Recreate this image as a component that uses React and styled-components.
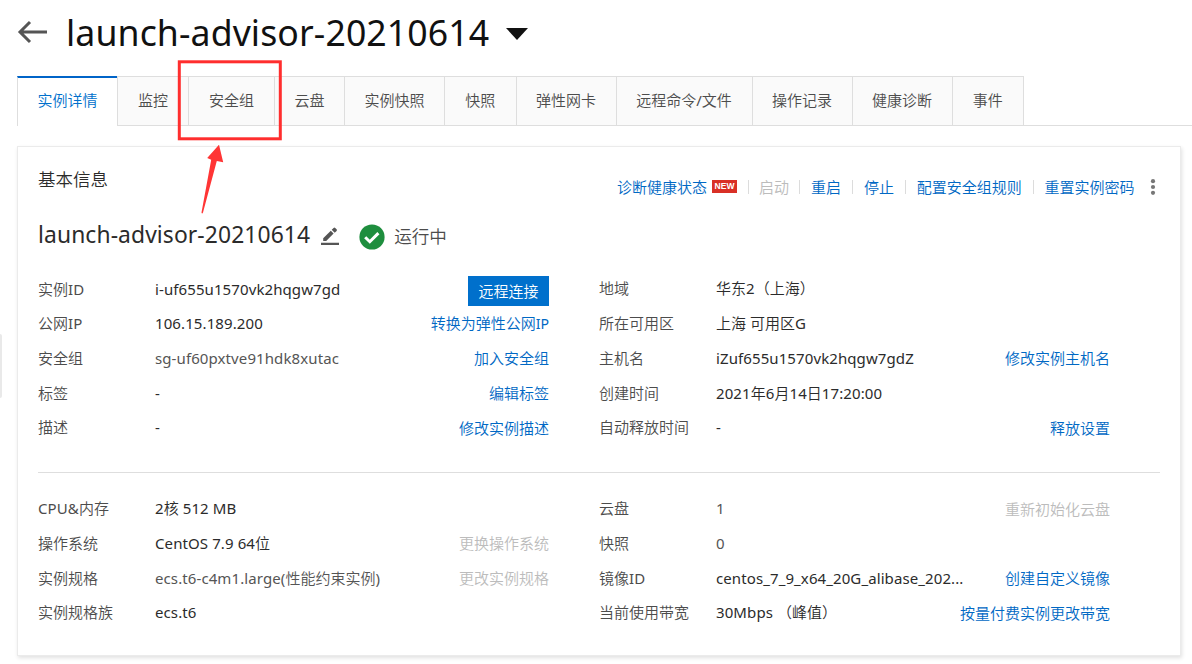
import React from "react";
import styled, { createGlobalStyle } from "styled-components";

const GlobalStyle = createGlobalStyle`
  * { box-sizing: border-box; }
  body {
    margin: 0;
    background: #fff;
    color: #2b2b2b;
    font-family: "Noto Sans CJK SC", sans-serif;
    font-size: 15px;
    font-weight: 350;
    overflow: hidden;
  }
`;

const Page = styled.div`
  position: relative;
  height: 664px;
  padding: 0 0 0 17px;
  overflow: hidden;
  background: #fff;
`;

const LatinRun = styled.span`
  font-family: "Noto Sans", sans-serif;
  font-size: 1em;
  font-weight: 400;
  letter-spacing: 0.1px;
  white-space: pre;
`;

const Text = ({ children }) =>
  children
    .split(/([\x20-\x7e]+)/)
    .filter(Boolean)
    .map((run, i) =>
      /^[\x20-\x7e]/.test(run) ? <LatinRun key={i}>{run}</LatinRun> : run
    );

const Header = styled.header`
  display: flex;
  align-items: center;
  height: 76px;
  padding-bottom: 11px;
`;

const BackIcon = styled.svg`
  width: 31px;
  height: 24px;
  margin: 0 18px 2px 0;
`;

const Title = styled.h1`
  margin: 0 0 3px;
  font-size: 35.65px;
  line-height: 50px;
  font-weight: 400;
  color: #111;
`;

const Caret = styled.svg`
  width: 22px;
  height: 12px;
  margin: 2px 0 0 17px;
`;

const Tabs = styled.nav`
  display: flex;
  height: 50px;
  border-bottom: 1px solid #dedede;
`;

const Tab = styled.a`
  width: ${(p) => p.$w}px;
  height: ${(p) => (p.$active ? 50 : 49)}px;
  flex: none;
  text-align: center;
  line-height: 46px;
  color: ${(p) => (p.$active ? "#0070cc" : "#4c4c4c")};
  background: ${(p) => (p.$active ? "#fff" : "#fafafa")};
  border-left: 1px solid #dedede;
  border-top: ${(p) => (p.$active ? "2px solid #0064c8" : "1px solid #dedede")};
  ${(p) => p.$active && "line-height: 44px;"}
  &:last-child { border-right: 1px solid #dedede; }
`;

const Card = styled.section`
  width: 1164px;
  height: 510px;
  margin-top: 20px;
  padding: 19px 20px 0;
  border: 1px solid #ebebeb;
  box-shadow: 1px 2px 4px rgba(0, 0, 0, 0.12);
`;

const CardHead = styled.div`
  display: flex;
  justify-content: space-between;
  height: 43px;
`;

const CardTitle = styled.h2`
  margin: 0;
  font-size: 17.5px;
  line-height: 26px;
  font-weight: inherit;
`;

const Actions = styled.div`
  display: flex;
  align-items: center;
  height: 41px;
`;

const Action = styled.a`
  margin: 0 ${(p) => (p.$disabled ? "-0.75px" : "0")};
  color: ${(p) => (p.$disabled ? "#bcbcbc" : "#0068c4")};
  white-space: nowrap;
`;

const Separator = styled.i`
  width: 1px;
  height: 14px;
  margin: 0 10.9px;
  background: #dcdcdc;
`;

const NewBadge = styled.span`
  width: 25px;
  height: 13px;
  margin-left: 5px;
  background: #d93026;
  color: #fff;
  font: bold 8.5px/13px "Liberation Sans", sans-serif;
  text-align: center;
`;

const MoreIcon = styled.svg`
  width: 6px;
  height: 16px;
  margin: 0 4px 0 15.5px;
`;

const NameRow = styled.div`
  display: flex;
  align-items: center;
  height: 53px;
`;

const Name = styled.span`
  margin-bottom: 4px;
  font-size: 22.85px;
  line-height: 32px;
`;

const EditIcon = styled.svg`
  width: 18px;
  height: 18px;
  margin: 1px 0 0 11px;
`;

const StatusIcon = styled.svg`
  width: 26px;
  height: 26px;
  margin: 2px 9px 0 20px;
`;

const Status = styled.span`
  margin-bottom: 1px;
  font-size: 17.6px;
  color: #4c4c4c;
`;

const Details = styled.div`
  display: grid;
  grid-template-columns: 1fr 1fr;
  padding-top: ${(p) => p.$top}px;
`;

const Row = styled.div`
  display: grid;
  grid-template-columns: 117px 1fr auto;
  align-items: center;
  height: 34.75px;
  padding-right: 50px;
  line-height: 24px;
  white-space: nowrap;
`;

const Label = styled.span`
  color: #4c4c4c;
`;

const Value = styled.span`
  color: ${(p) => (p.$muted ? "#555" : "#2b2b2b")};
`;

const RowAction = styled.a`
  padding-top: 1px;
  color: ${(p) => (p.$disabled ? "#bcbcbc" : "#0068c4")};
  ${LatinRun} { font-size: 0.94em; letter-spacing: 0; }
`;

const ConnectButton = styled.button`
  width: 81px;
  height: 30px;
  margin-top: 5px;
  padding: 0;
  border: 0;
  background: #0070cc;
  color: #fff;
  font: inherit;
  line-height: 30px;
`;

const Divider = styled.hr`
  height: 1px;
  margin: 27px 0 0;
  border: 0;
  background: #dedede;
`;

const SideHandle = styled.div`
  position: absolute;
  left: 0;
  top: 334px;
  width: 2px;
  height: 64px;
  background: #e9e9e9;
  border-radius: 0 2px 2px 0;
`;

const Annotation = styled.svg`
  position: absolute;
  left: 176px;
  top: 58px;
  width: 108px;
  height: 160px;
`;

const tabs = [
  ["实例详情", 100],
  ["监控", 71],
  ["安全组", 86],
  ["云盘", 70],
  ["实例快照", 100],
  ["快照", 71.5],
  ["弹性网卡", 100],
  ["远程命令/文件", 136],
  ["操作记录", 100],
  ["健康诊断", 100],
  ["事件", 72.5],
];

const basics = [
  { label: "实例ID", value: "i-uf655u1570vk2hqgw7gd", button: "远程连接" },
  { label: "地域", value: "华东2（上海）" },
  { label: "公网IP", value: "106.15.189.200", action: "转换为弹性公网IP" },
  { label: "所在可用区", value: "上海 可用区G" },
  { label: "安全组", value: "sg-uf60pxtve91hdk8xutac", muted: true, action: "加入安全组" },
  { label: "主机名", value: "iZuf655u1570vk2hqgw7gdZ", action: "修改实例主机名" },
  { label: "标签", value: "-", action: "编辑标签" },
  { label: "创建时间", value: "2021年6月14日17:20:00" },
  { label: "描述", value: "-", action: "修改实例描述" },
  { label: "自动释放时间", value: "-", action: "释放设置" },
];

const config = [
  { label: "CPU&内存", value: "2核 512 MB" },
  { label: "云盘", value: "1", muted: true, action: "重新初始化云盘", disabled: true },
  { label: "操作系统", value: "CentOS 7.9 64位", action: "更换操作系统", disabled: true },
  { label: "快照", value: "0", muted: true },
  { label: "实例规格", value: "ecs.t6-c4m1.large(性能约束实例)", muted: true, action: "更改实例规格", disabled: true },
  { label: "镜像ID", value: "centos_7_9_x64_20G_alibase_202...", action: "创建自定义镜像" },
  { label: "实例规格族", value: "ecs.t6" },
  { label: "当前使用带宽", value: "30Mbps （峰值）", action: "按量付费实例更改带宽" },
];

const DetailRow = ({ item }) => (
  <Row>
    <Label><Text>{item.label}</Text></Label>
    <Value $muted={item.muted}><Text>{item.value}</Text></Value>
    {item.button && <ConnectButton>{item.button}</ConnectButton>}
    {item.action && (
      <RowAction $disabled={item.disabled}><Text>{item.action}</Text></RowAction>
    )}
  </Row>
);

export default function App() {
  return (
    <Page>
      <GlobalStyle />
      <Header>
        <BackIcon viewBox="0 0 31 24" fill="none" stroke="#555" strokeWidth="3">
          <path d="M30 12H3M13 2L3 12l10 10" />
        </BackIcon>
        <Title><Text>launch-advisor-20210614</Text></Title>
        <Caret viewBox="0 0 22 12"><path d="M0 0h22L11 12z" fill="#111" /></Caret>
      </Header>
      <Tabs>
        {tabs.map(([name, w], i) => (
          <Tab key={name} $w={w} $active={i === 0}><Text>{name}</Text></Tab>
        ))}
      </Tabs>
      <Card>
        <CardHead>
          <CardTitle>基本信息</CardTitle>
          <Actions>
            <Action>诊断健康状态</Action>
            <NewBadge>NEW</NewBadge>
            <Separator />
            <Action $disabled>启动</Action>
            <Separator />
            <Action>重启</Action>
            <Separator />
            <Action>停止</Action>
            <Separator />
            <Action>配置安全组规则</Action>
            <Separator />
            <Action>重置实例密码</Action>
            <MoreIcon viewBox="0 0 6 16" fill="#777">
              <circle cx="3" cy="2.2" r="2.1" />
              <circle cx="3" cy="8" r="2.1" />
              <circle cx="3" cy="13.8" r="2.1" />
            </MoreIcon>
          </Actions>
        </CardHead>
        <NameRow>
          <Name><Text>launch-advisor-20210614</Text></Name>
          <EditIcon viewBox="0 0 18 18" fill="#555">
            <path d="M0 15.8h18V18H0zM2.2 11.3L9.8 3.7l2.8 2.8-7.4 7.4H2.2zM10.7 2.8L12.6.9q.8-.8 1.6 0l1.4 1.4q.7.8 0 1.6l-1.9 1.8z" />
          </EditIcon>
          <StatusIcon viewBox="0 0 26 26">
            <circle cx="13" cy="13" r="12.6" fill="#1e8e3e" />
            <path d="M6.2 13.2l4.6 4.5 8.6-8.6" fill="none" stroke="#fff" strokeWidth="3" />
          </StatusIcon>
          <Status>运行中</Status>
        </NameRow>
        <Details $top={9}>
          {basics.map((item) => <DetailRow key={item.label} item={item} />)}
        </Details>
        <Divider />
        <Details $top={18}>
          {config.map((item) => <DetailRow key={item.label} item={item} />)}
        </Details>
      </Card>
      <SideHandle />
      <Annotation viewBox="0 0 108 160">
        <rect x="3.3" y="3.8" width="101" height="77" fill="none" stroke="#ff2e2e" strokeWidth="3" />
        <path d="M43 86.8l4.2 17.5-6.4-1.3L27 154.5q-1 2-1.5 0L35.2 101.8l-4-1.8z" fill="#ff3535" />
      </Annotation>
    </Page>
  );
}
